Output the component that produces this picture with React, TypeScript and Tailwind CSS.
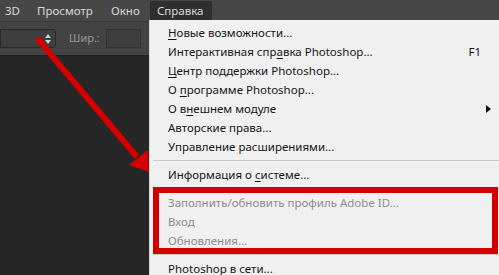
const font = { fontFamily: '"Segoe UI", "Noto Sans", "Open Sans", sans-serif' };

type Item = {
  label: string;
  mnemonic?: number;
  shortcut?: string;
  submenu?: boolean;
  disabled?: boolean;
  separator?: boolean;
};

const items: Array<Item> = [
  { label: 'Новые возможности...', mnemonic: 0 },
  { label: 'Интерактивная справка Photoshop...', mnemonic: 17, shortcut: 'F1' },
  { label: 'Центр поддержки Photoshop...', mnemonic: 0 },
  { label: 'О программе Photoshop...', mnemonic: 2 },
  { label: 'О внешнем модуле', mnemonic: 3, submenu: true },
  { label: 'Авторские права...' },
  { label: 'Управление расширениями...' },
  { label: '', separator: true },
  { label: 'Информация о системе...', mnemonic: 13 },
  { label: '', separator: true },
  { label: 'Заполнить/обновить профиль Adobe ID...', disabled: true },
  { label: 'Вход', disabled: true },
  { label: 'Обновления...', disabled: true },
  { label: '', separator: true },
  { label: 'Photoshop в сети...', mnemonic: 10 },
];

const Label = ({ label, mnemonic }: { label: string; mnemonic?: number }) => {
  if (mnemonic === undefined) return <>{label}</>;
  return (
    <>
      {label.slice(0, mnemonic)}
      <span className="underline underline-offset-2">{label[mnemonic]}</span>
      {label.slice(mnemonic + 1)}
    </>
  );
};

const MenuRow = ({ item }: { item: Item }) => {
  if (item.separator) {
    return (
      <div className="h-[9px] flex items-center pl-[3px]">
        <div className="h-px w-full bg-[#c9c9c9]" />
      </div>
    );
  }
  return (
    <div
      className={`h-[19px] flex items-center pl-[18px] pr-[18px] text-[11.5px] ${
        item.disabled ? 'text-[#8c8c8c]' : 'text-[#151515]'
      }`}
    >
      <span className="flex-1 whitespace-nowrap">
        <Label label={item.label} mnemonic={item.mnemonic} />
      </span>
      {item.shortcut && <span>{item.shortcut}</span>}
      {item.submenu && (
        <svg width="5" height="8" viewBox="0 0 5 8" className="-mr-[10px]">
          <path d="M0 0 L5 4 L0 8 Z" fill="#111" />
        </svg>
      )}
    </div>
  );
};

const MenuBar = () => (
  <div className="h-[21px] bg-[#474747] flex items-end text-[11.5px] text-[#d9d9d9]">
    <span className="w-[37px] pl-[5px] h-[20px] flex items-center">3D</span>
    <span className="w-[74px] h-[20px] flex items-center">Просмотр</span>
    <span className="w-[39px] h-[20px] flex items-center">Окно</span>
    <span className="h-[20px] w-[62px] flex items-center pl-[7px] rounded-t-[2px] bg-[#2f2f2f]">
      Справка
    </span>
  </div>
);

const OptionsBar = () => (
  <div className="h-[35px] bg-[#434343] border-t border-[#3a3a3a] border-b border-b-[#1e1e1e] flex items-center">
    <div className="w-[56px] h-[19px] rounded-r-[3px] bg-[#3e3e3e] border border-[#2a2a2a] flex items-center justify-end pr-[4px]">
      <svg width="6" height="10" viewBox="0 0 6 10">
        <path d="M0 4 L3 0 L6 4 Z M0 6 L3 10 L6 6 Z" fill="#cfcfcf" />
      </svg>
    </div>
    <span className="ml-[13px] text-[11px] text-[#9a9a9a]">Шир.:</span>
    <div className="ml-[6px] w-[35px] h-[19px] bg-[#3d3d3d] border border-[#333]" />
  </div>
);

const App = () => (
  <div className="relative w-[499px] h-[275px] overflow-hidden bg-[#262626] flex flex-col" style={font}>
    <MenuBar />
    <OptionsBar />
    <div className="flex-1 bg-[#262626]" />

    <div className="absolute left-[149px] top-[20px] w-[350px] h-[260px] bg-[#f0f0f0] border-l border-[#d6d6d6] pt-[3px]">
      {items.map((item, index) => (
        <MenuRow key={index} item={item} />
      ))}
    </div>

    <div className="absolute left-[153px] top-[187px] w-[345px] h-[67px] border-[6px] border-[#d40000]" />

    <svg className="absolute left-0 top-0" width="499" height="275" viewBox="0 0 499 275">
      <line x1="37" y1="38" x2="137" y2="157" stroke="#d40000" strokeWidth="6" />
      <path d="M129 165 L148 150 L149 172 Z" fill="#d40000" />
    </svg>
  </div>
);

export default App;
